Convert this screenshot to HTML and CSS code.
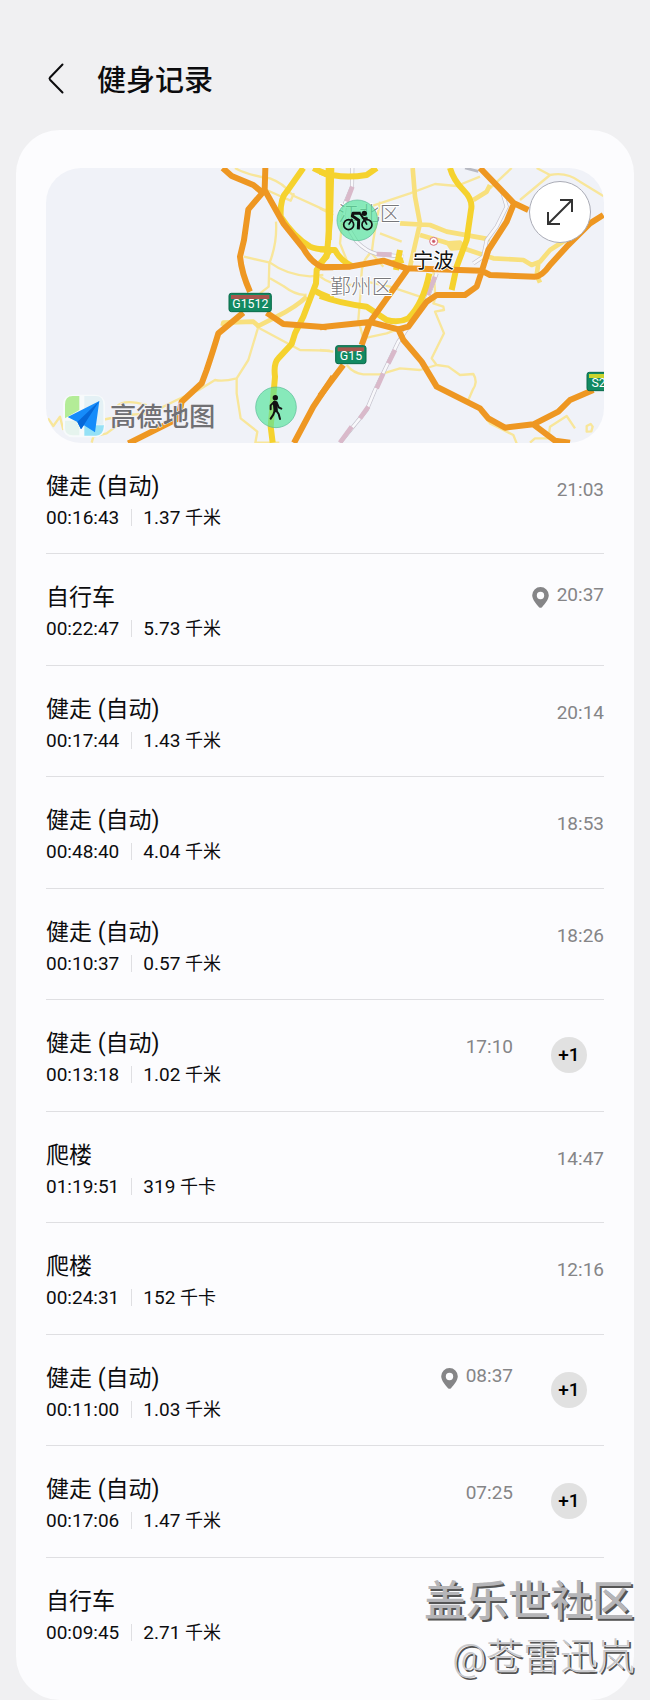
FILE: index.html
```html
<!DOCTYPE html>
<html lang="zh-CN">
<head>
<meta charset="utf-8">
<meta name="viewport" content="width=device-width, initial-scale=1">
<title>健身记录</title>
<link rel="stylesheet" href="styles.css">
</head>
<body>
<svg class="defs" aria-hidden="true">
  <symbol id="pin" viewBox="0 0 17 21"><path fill-rule="evenodd" d="M8.500 0A8.300 8.300 0 0 0 .2 8.300C.2 12.500 4.500 17.500 7 20.200Q8.500 21.500 10 20.200C12.500 17.500 16.800 12.500 16.800 8.300A8.300 8.300 0 0 0 8.500 0ZM8.500 4.800A3.700 3.700 0 1 1 8.500 12.200A3.700 3.700 0 1 1 8.500 4.800Z"/></symbol>
</svg>
<header class="topbar">
  <button class="back" type="button" aria-label="返回">
    <svg viewBox="0 0 18 32" fill="none"><path d="M15.500 2.500 3 15.500Q2 16.600 3 17.700L15.500 30.500"/></svg>
  </button>
  <h1 class="title">健身记录</h1>
</header>
<main class="card">
  <section class="map" aria-label="地图">
    <svg class="map-canvas" viewBox="18 24 1674 825">
      <rect x="18" y="24" width="1674" height="825" fill="#f0f2f8"/>
      <g class="minor">
        <path d="M585 24Q620 45 690 55Q730 70 750 98L762 108 850 148 880 155"/>
        <path d="M680 90 720 108 752 122 762 100M708 185Q712 250 688 310L686 380 660 400"/>
        <path d="M612 290 690 308Q740 345 810 349L850 345M690 355 730 378Q770 408 800 404"/>
        <path d="M650 500 780 570 870 572M655 500 625 600 590 655Q550 665 525 660L480 688 410 720 330 760 260 765 185 780"/>
        <path d="M590 655 590 700 602 775 652 815 646 848H718M24 775 40 798 60 770 70 810M230 740Q250 715 320 735M155 848 160 830 200 820 240 790"/>
      </g>
      <g class="minor" transform="translate(840 0)">
        <path d="M150 140Q210 120 270 100L345 72 410 78 480 50M180 125 160 240 155 280 190 320M0 145 40 165M575 24 510 85M600 120 690 45 650 24M690 45Q740 35 780 65L850 108"/>
        <path d="M70 150 60 250 80 300M150 280Q120 310 125 360L115 480 130 535 200 520 240 505M180 220 245 245"/>
        <path d="M140 365 210 380 300 410M340 335Q350 420 340 430L370 440 372 450 345 455 372 520 335 595 350 615 300 630 240 625 180 643 130 643Q100 640 80 615M350 615 385 620 420 645 460 642Q475 665 458 690L445 720"/>
        <path d="M0 570 40 575M480 755 510 790 550 810 580 825 590 850M630 848 645 835 685 835 690 800 740 768 765 805M800 798 812 792 818 800 814 814 800 815ZM0 350Q40 380 90 375L150 375"/>
      </g>
      <g class="local">
        <path d="M548 498 550 488 640 485 655 498 710 470Q770 440 800 410"/>
        <path transform="translate(840 0)" d="M278 24 285 110 300 190 270 320M240 190 330 195 380 215 510 238M300 225 370 245 430 265 520 295 610 300 635 315 660 305 690 270 760 225M385 250 420 248 430 262 395 265ZM655 310 650 345 660 368M460 120 500 95 510 75"/>
      </g>
      <g class="rail" transform="translate(840 0)">
        <path class="rail-base" d="M97 24 96 80 75 130 70 180 110 245Q140 275 170 282L250 290M350 340 320 420 235 545 165 690 140 750 60 848M545 90 560 140 530 200 500 240 490 290 460 310"/>
        <path class="rail-white" d="M97 24 96 80 75 130 70 180 110 245Q140 275 170 282L250 290M350 340 320 420 235 545 165 690 140 750 60 848M545 90 560 140 530 200 500 240 490 290 460 310"/>
        <path class="rail-dash" d="M97 80 80 125M170 282 215 284M345 350 322 405M225 570 205 610M190 640 170 685M145 740 120 775M95 800 60 848"/>
        <path d="M435 24 475 34" stroke="#b7b9c2" stroke-width="8"/>
      </g>
      <g class="main">
        <path d="M790 24 740 95Q720 115 722 170Q760 230 810 260Q830 270 870 268M866 24V240M820 24 860 44M870 270 830 330 828 370 790 470 765 520 755 552 715 595Q700 610 705 650L692 800 698 848M815 385Q840 405 880 415"/>
        <g transform="translate(840 0)">
          <path d="M0 35Q60 58 140 45L170 24M34 24 30 180 20 290 0 310M0 268 45 270Q60 300 95 318M390 24Q400 60 430 90Q460 120 453 150L440 240 410 320 395 390M0 408Q60 430 140 440L200 480Q235 490 265 475Q310 430 328 340M240 270 228 330M218 310 250 300"/>
        </g>
      </g>
      <g class="highway">
        <path d="M548 24 575 48 640 75 668 98 625 148 612 240 600 290Q605 340 630 395M676 24 674 90 730 190 790 265Q815 310 850 322H880M680 458 730 492 860 502M610 458 535 520Q520 570 500 630L485 670 425 725 415 775 265 850M880 650 820 740 762 849"/>
        <g transform="translate(840 0)">
          <path d="M0 322 90 320 190 302 260 325 485 332 510 345 645 350Q665 350 690 315L740 260 810 190 850 165M480 24 582 130 625 150M582 130 560 185 505 270 485 335 470 380 435 405 350 405 320 425 265 500 235 508 150 486 0 502M265 325 150 486 125 555M235 508 250 540 305 605 350 680 480 745 505 775 555 803 640 793 705 842 750 848M640 793 715 755 750 720 820 690M70 615 0 708"/>
        </g>
      </g>
      <g class="sign">
        <rect x="567" y="400" width="127" height="55" rx="7"/><rect class="sign-red" x="573" y="405" width="115" height="12"/><text x="631" y="445">G1512</text>
        <g transform="translate(840 0)"><rect x="47" y="557" width="91" height="54" rx="7"/><rect class="sign-red" x="53" y="562" width="79" height="12"/><text x="93" y="600">G15</text>
        <rect x="801" y="637" width="95" height="55" rx="7"/><rect class="sign-yellow" x="807" y="642" width="83" height="12"/><text x="846" y="681">S20</text></g>
      </g>
      <g transform="translate(840 0)">
        <text class="district" x="148" y="182">江北区</text>
        <text class="district" x="124" y="403">鄞州区</text>
        <text class="city" x="340" y="325">宁波</text>
        <g fill="none" stroke="#d97480" stroke-width="3"><circle cx="341" cy="244" r="12" fill="#fff"/><circle cx="341" cy="244" r="4" fill="#c75062"/></g>
        <circle class="spot" cx="112" cy="181" r="61"/>
        <g fill="none" stroke="#111" stroke-width="5"><circle cx="86" cy="194" r="15"/><circle cx="141" cy="194" r="15"/><path d="M86 194 97 177M130 175 141 194"/><path stroke-width="9" stroke-linejoin="round" d="M122 160H99L97 168 116 181 115 208"/><path stroke-width="6" d="M120 160 130 175H143"/></g><circle cx="133" cy="160" r="8" fill="#111"/>
      </g>
      <circle class="spot" cx="708" cy="742" r="61"/>
      <g fill="none" stroke="#111" stroke-linecap="round" stroke-linejoin="round"><circle cx="706" cy="713" r="8" fill="#111" stroke="none"/><path stroke-width="13" d="M705 729 707 750"/><path stroke-width="6" d="M703 725 692 736V748M710 727 716 742 724 746M704 752 700 764 692 776M709 752 716 762 720 777"/></g>
      <g class="brand">
        <rect x="69" y="704" width="126" height="128" rx="28" fill="#f7fafb"/>
        <path d="M98 708H118V750L75 775V734Q75 708 98 708Z" fill="#b3ec97"/><path d="M133 708H168Q190 708 190 734V794H133Z" fill="#e4f1f5"/><path d="M75 782H118V826H98Q75 826 75 804Z" fill="#e6f4ee"/><path d="M133 796H192Q190 827 168 827H133Z" fill="#95e1f6"/>
        <path d="M178 723 83 771 112 786 123 808 132 796 165 817Z" fill="#168cfa"/><path d="M178 723 112 786 123 808 132 794Z" fill="#0668d8"/>
        <text x="210" y="798">高德地图</text>
      </g>
    </svg>
    <button class="expand" type="button" aria-label="展开地图">
      <svg viewBox="0 0 28 28" fill="none"><path d="M2 26 26 2M14 2H26V14M2 14V26H14"/></svg>
    </button>
  </section>
  <ul class="records">
    <li class="record"><div class="info"><h2>健走 (自动)</h2><p><span>00:16:43</span><span class="amount">1.37 <small>千米</small></span></p></div><time>21:03</time></li>
    <li class="record located"><div class="info"><h2>自行车</h2><p><span>00:22:47</span><span class="amount">5.73 <small>千米</small></span></p></div><svg class="pin"><use href="#pin"/></svg><time>20:37</time></li>
    <li class="record"><div class="info"><h2>健走 (自动)</h2><p><span>00:17:44</span><span class="amount">1.43 <small>千米</small></span></p></div><time>20:14</time></li>
    <li class="record"><div class="info"><h2>健走 (自动)</h2><p><span>00:48:40</span><span class="amount">4.04 <small>千米</small></span></p></div><time>18:53</time></li>
    <li class="record"><div class="info"><h2>健走 (自动)</h2><p><span>00:10:37</span><span class="amount">0.57 <small>千米</small></span></p></div><time>18:26</time></li>
    <li class="record"><div class="info"><h2>健走 (自动)</h2><p><span>00:13:18</span><span class="amount">1.02 <small>千米</small></span></p></div><time>17:10</time><span class="more">+1</span></li>
    <li class="record"><div class="info"><h2>爬楼</h2><p><span>01:19:51</span><span class="amount">319 <small>千卡</small></span></p></div><time>14:47</time></li>
    <li class="record"><div class="info"><h2>爬楼</h2><p><span>00:24:31</span><span class="amount">152 <small>千卡</small></span></p></div><time>12:16</time></li>
    <li class="record located"><div class="info"><h2>健走 (自动)</h2><p><span>00:11:00</span><span class="amount">1.03 <small>千米</small></span></p></div><svg class="pin"><use href="#pin"/></svg><time>08:37</time><span class="more">+1</span></li>
    <li class="record"><div class="info"><h2>健走 (自动)</h2><p><span>00:17:06</span><span class="amount">1.47 <small>千米</small></span></p></div><time>07:25</time><span class="more">+1</span></li>
    <li class="record"><div class="info"><h2>自行车</h2><p><span>00:09:45</span><span class="amount">2.71 <small>千米</small></span></p></div><time>07:01</time></li>
  </ul>
</main>
<div class="watermark"><p class="community">盖乐世社区</p><p class="author">@苍雷迅岚</p></div>
</body>
</html>
```
FILE: styles.css
```css
* { box-sizing: border-box; margin: 0; padding: 0; }
body {
  position: relative;
  display: flex;
  flex-direction: column;
  min-height: 100vh;
  padding: 0 16px;
  background: #f0f0f2;
  color: #0c0c0e;
  font-family: Roboto, "Noto Sans CJK SC", sans-serif;
}
.defs { position: absolute; width: 0; height: 0; }
button { border: 0; background: none; }

.topbar { display: flex; align-items: flex-start; gap: 32px; padding: 60px 31px 28px; }
.back { width: 18px; height: 36px; }
.back svg { display: block; width: 18px; height: 32px; stroke: #0c0c0e; stroke-width: 2; stroke-linecap: round; }
.title { font-size: 29px; line-height: 42px; font-weight: 500; }

.card {
  flex: 1;
  display: flex;
  flex-direction: column;
  padding: 38px 30px 31px;
  border-radius: 44px;
  background: #fcfcfe;
}
.map { position: relative; border-radius: 35px; overflow: hidden; }
.map-canvas { display: block; width: 100%; fill: none; stroke-linejoin: round; }
.minor { stroke: #f8e69a; stroke-width: 7; }
.local { stroke: #f8e07c; stroke-width: 14; }
.main { stroke: #f5d22e; stroke-width: 18; }
.highway { stroke: #ee9722; stroke-width: 18; }
.rail-base { stroke: #c2c0cb; stroke-width: 12; }
.rail-white { stroke: #f8f8fb; stroke-width: 8; }
.rail-dash { stroke: #d9b9ca; stroke-width: 14; }
.sign rect { fill: #128a62; stroke: #086a49; stroke-width: 3; }
.sign .sign-red { fill: #a7564d; stroke: none; }
.sign .sign-yellow { fill: #c9d42c; stroke: none; }
.sign text { fill: #fff; font-size: 37px; text-anchor: middle; }
.district, .city { font-size: 62px; text-anchor: middle; fill: #77777b; stroke: #fff; stroke-width: 6px; paint-order: stroke; font-weight: 300; }
.city { fill: #111; font-weight: 400; }
.spot { fill: #55e49c; fill-opacity: .68; stroke: #55b994; stroke-width: 2; }
.brand text { fill: #707074; font-size: 79px; font-weight: 500; stroke: #f4f4f8; stroke-width: 4px; paint-order: stroke; }
.expand {
  position: absolute;
  top: 13px;
  right: 13px;
  display: grid;
  place-items: center;
  width: 62px;
  height: 62px;
  border: 1px solid #a9abb5;
  border-radius: 50%;
  background: #fff;
}
.expand svg { width: 28px; height: 28px; stroke: #333; stroke-width: 2; }

.records { flex: 1; display: grid; grid-auto-rows: 1fr; list-style: none; }
.record { display: flex; align-items: flex-start; border-bottom: 1px solid #dfdfe2; }
.record:last-child { border-bottom: 0; }
.info { flex: 1; padding: 28px 0 18px; }
.info h2 { font-size: 23px; line-height: 32px; font-weight: 400; }
.info p { display: flex; align-items: center; font-size: 19px; line-height: 30px; }
.amount { white-space: pre; }
.amount::before { content: ""; display: inline-block; width: 1px; height: 17px; margin: 0 11px 0 12px; vertical-align: -2px; background: #dfdfe2; }
.amount small { font-size: 18px; }
time { padding-top: 35px; color: #858587; font-size: 19px; line-height: 24px; }
.located time { padding-top: 29px; }
.pin { width: 17px; height: 21px; margin: 33px 8px 0 0; fill: #858587; }
.more {
  align-self: center;
  width: 36px;
  margin: 0 17px 0 38px;
  border-radius: 50%;
  background: #e1e1e1;
  color: #000;
  font-size: 19px;
  line-height: 36px;
  font-weight: 500;
  text-align: center;
}
.watermark { position: absolute; right: 16px; bottom: 14px; text-align: right; pointer-events: none; }
.community { color: #b5b5b8; font-size: 42px; line-height: 56px; font-weight: 500; text-shadow: 2px 2px #555; }
.author { color: #c9c9cc; font-size: 37px; line-height: 56px; font-weight: 300; text-shadow: 2px 2px #555; }
```
